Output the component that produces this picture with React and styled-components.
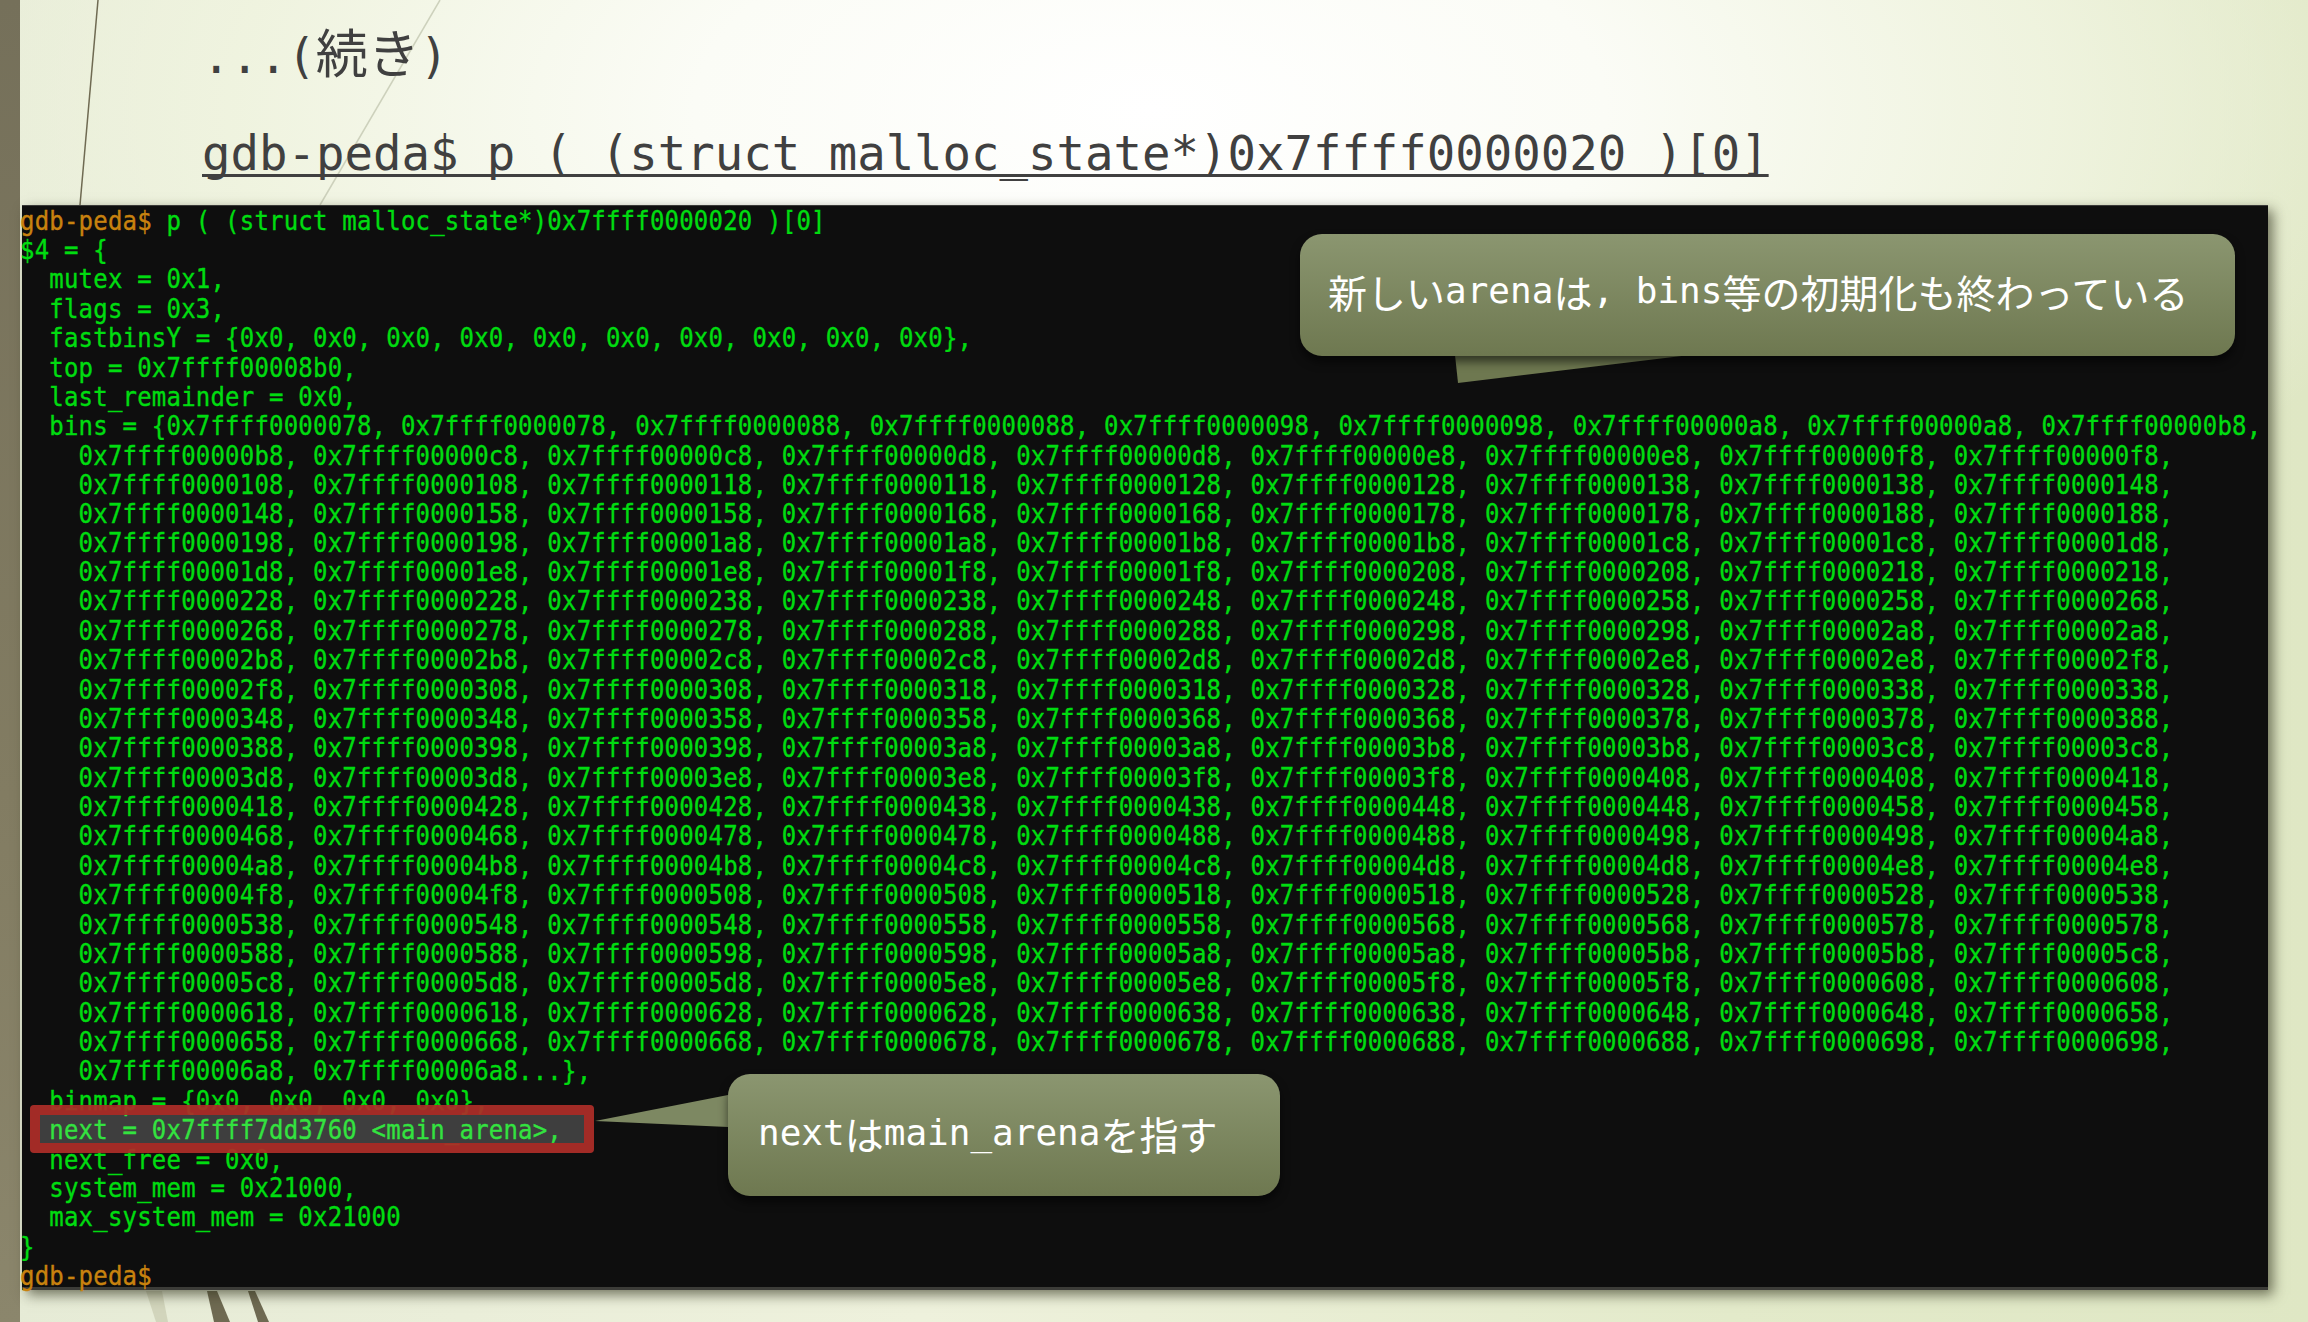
import React from 'react';
import styled, { createGlobalStyle } from 'styled-components';

const Global = createGlobalStyle`
  html, body { margin: 0; padding: 0; }
  body { width: 2308px; height: 1322px; overflow: hidden; background: #e2e9c8; }
`;

const Slide = styled.div`
  position: relative;
  width: 2308px;
  height: 1322px;
  overflow: hidden;
  display: flex;
  background:
    radial-gradient(ellipse 1300px 620px at 1150px 110px, #ffffff 0%, #fbfcf6 35%, rgba(240,244,224,0.9) 70%, rgba(226,233,200,0) 100%),
    linear-gradient(90deg, #e6ebd6 0%, #eef1dc 40%, #e3eaca 75%, #dfe7c4 100%);
`;

const Strip = styled.div`
  flex: 0 0 20px;
  background: linear-gradient(180deg, #75705a 0%, #827c62 60%, #8b866c 100%);
`;

const Decor = styled.svg`
  position: absolute;
  inset: 0;
  pointer-events: none;
`;

const Main = styled.main`
  position: relative;
  flex: 1;
  display: flex;
  flex-direction: column;
  padding-left: 2px;
`;

const Header = styled.header`
  height: 205px;
  box-sizing: border-box;
  padding: 15px 0 0 180px;
  color: #404040;
  font-family: "DejaVu Sans Mono", "Noto Sans CJK JP", monospace;
`;

const Title = styled.h1`
  margin: 0;
  font-weight: 400;
  font-size: 47.26px;
  line-height: 72px;
`;

const Ja = styled.span`
  font-family: "Noto Sans CJK JP", sans-serif;
  font-size: ${p => p.$size}px;
  font-weight: 400;
`;

const Command = styled.div`
  margin-top: 31px;
  font-size: 47.32px;
  line-height: 60px;
  text-decoration: underline;
  text-decoration-thickness: 3px;
  text-decoration-skip-ink: none;
  text-underline-offset: 4px;
  white-space: pre;
`;

const Terminal = styled.section`
  position: relative;
  width: 2246px;
  height: 1085px;
  box-sizing: border-box;
  background: #0e0e0e;
  border-top: 1px solid #3a3a38;
  border-bottom: 3px solid #3c3c38;
  box-shadow: 5px 5px 12px rgba(50, 52, 30, 0.65);
`;

const Output = styled.div`
  font-family: "DejaVu Sans Mono", monospace;
  font-size: 24px;
  letter-spacing: 0.2px;
  line-height: 25.96px;
  white-space: pre;
  color: #00dc10;
  -webkit-text-stroke: 0.35px currentColor;
  margin: 1px 0 0 -2px;
  transform: scaleY(1.13);
  transform-origin: 0 0;
`;

const Line = styled.div`
  height: 25.96px;
`;

const Prompt = styled.span`
  color: #c8820e;
`;

const Highlight = styled.div`
  position: absolute;
  left: 8px;
  top: 899px;
  width: 564px;
  height: 48px;
  box-sizing: border-box;
  border: 10px solid rgba(172, 46, 40, 0.94);
  border-radius: 4px;
  background: rgba(255, 255, 255, 0.2);
  background-clip: padding-box;
`;

const Callout = styled.div`
  position: absolute;
  left: ${p => p.$left}px;
  top: ${p => p.$top}px;
  width: ${p => p.$width}px;
  height: 122px;
  box-sizing: border-box;
  padding: 0 0 ${p => p.$lift}px ${p => p.$pad}px;
  display: flex;
  align-items: center;
  border-radius: 22px;
  background: linear-gradient(180deg, #8b9670 0%, #6e7850 100%);
  box-shadow: 0 6px 10px rgba(0, 0, 0, 0.55);
  color: #fff;
  font-family: "DejaVu Sans Mono", monospace;
  font-size: 36px;
  white-space: pre;
`;

const Tail = styled.svg`
  position: absolute;
  overflow: visible;
  left: 0;
  top: 0;
`;

const sequence = [];
for (let a = 0x78; a <= 0x6a8; a += 0x10) sequence.push(a, a);
const hex = a => '0x7ffff0000' + a.toString(16).padStart(3, '0');
const rows = [];
for (let i = 0; i < sequence.length; i += 9) rows.push(sequence.slice(i, i + 9).map(hex).join(', '));
const binLines = rows.map((r, i) => {
  if (i === 0) return '  bins = {' + r + ',';
  if (i === rows.length - 1) return '    ' + r + '...},';
  return '    ' + r + ',';
});

const before = ['$4 = {', '  mutex = 0x1,', '  flags = 0x3,', '  fastbinsY = {0x0, 0x0, 0x0, 0x0, 0x0, 0x0, 0x0, 0x0, 0x0, 0x0},', '  top = 0x7ffff00008b0,', '  last_remainder = 0x0,'];
const after = ['  binmap = {0x0, 0x0, 0x0, 0x0},', '  next = 0x7ffff7dd3760 <main_arena>,', '  next_free = 0x0,', '  system_mem = 0x21000,', '  max_system_mem = 0x21000', '}'];

export default function App() {
  return (
    <>
      <Global />
      <Slide>
        <Decor width="2308" height="1322" viewBox="0 0 2308 1322">
          <path d="M98 0 L80 205" stroke="#6f6a52" strokeWidth="1.5" fill="none" />
          <path d="M440 0 L320 205" stroke="#cdd1bc" strokeWidth="1.5" fill="none" />
          <path d="M146 1291 L156 1322 L168 1322 L162 1291 Z" fill="#d2d5bc" />
          <path d="M207 1291 L214 1322 L230 1322 L217 1291 Z" fill="#6f6a52" />
          <path d="M248 1291 L258 1322 L269 1322 L255 1291 Z" fill="#6f6a52" />
        </Decor>
        <Strip />
        <Main>
          <Header>
            <Title>...(<Ja $size={52}>続き</Ja>)</Title>
            <Command>gdb-peda$ p ( (struct malloc_state*)0x7ffff0000020 )[0]</Command>
          </Header>
          <Terminal>
            <Output>
              <Line><Prompt>gdb-peda$</Prompt> p ( (struct malloc_state*)0x7ffff0000020 )[0]</Line>
              {before.map(l => <Line key={l}>{l}</Line>)}
              {binLines.map(l => <Line key={l}>{l}</Line>)}
              {after.map(l => <Line key={l}>{l}</Line>)}
              <Line><Prompt>gdb-peda$</Prompt></Line>
            </Output>
            <Highlight />
            <Tail width="1" height="1">
              <path d="M573 915 L706 889 L706 921 Z" fill="#7d8862" />
              <path d="M1433 149 L1436 177 L1668 149 Z" fill="#6e7850" />
            </Tail>
            <Callout $left={1278} $top={28} $width={935} $pad={28} $lift={9}>
              <Ja $size={39}>新しい</Ja>arena<Ja $size={39}>は</Ja>, bins<Ja $size={39}>等の初期化も終わっている</Ja>
            </Callout>
            <Callout $left={706} $top={868} $width={552} $pad={30} $lift={5}>
              next<Ja $size={39}>は</Ja>main_arena<Ja $size={39}>を指す</Ja>
            </Callout>
          </Terminal>
        </Main>
      </Slide>
    </>
  );
}
